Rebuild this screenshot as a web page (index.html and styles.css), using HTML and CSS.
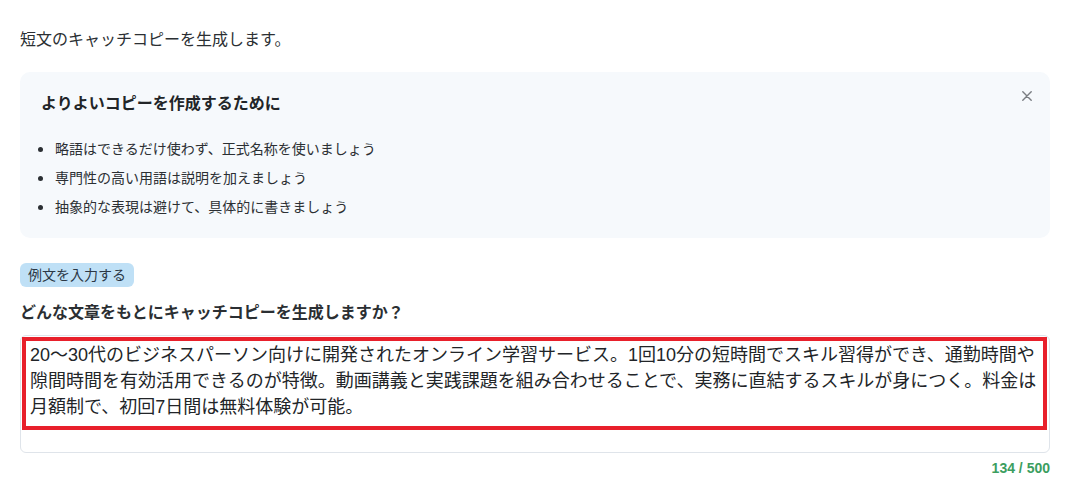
FILE: index.html
```html
<!DOCTYPE html>
<html lang="ja">
<head>
<meta charset="utf-8">
<title>キャッチコピー生成</title>
<link rel="stylesheet" href="styles.css">
</head>
<body>
<main class="page">
  <p class="intro">短文のキャッチコピーを生成します。</p>

  <section class="tips">
    <h2 class="tips-title">よりよいコピーを作成するために</h2>
    <button class="tips-close" type="button" aria-label="閉じる">
      <svg width="10" height="10" viewBox="0 0 10 10"><path d="M0.8 0.8 L9.2 9.2 M9.2 0.8 L0.8 9.2" stroke="#7a7d82" stroke-width="1.4" fill="none" stroke-linecap="round"/></svg>
    </button>
    <ul class="tips-list">
      <li class="tips-item">略語はできるだけ使わず、正式名称を使いましょう</li>
      <li class="tips-item">専門性の高い用語は説明を加えましょう</li>
      <li class="tips-item">抽象的な表現は避けて、具体的に書きましょう</li>
    </ul>
  </section>

  <button class="example-btn" type="button">例文を入力する</button>

  <label class="field-label" for="src">どんな文章をもとにキャッチコピーを生成しますか？</label>
  <div class="input-box">
    <textarea id="src" class="source-input">20〜30代のビジネスパーソン向けに開発されたオンライン学習サービス。1回10分の短時間でスキル習得ができ、通勤時間や隙間時間を有効活用できるのが特徴。動画講義と実践課題を組み合わせることで、実務に直結するスキルが身につく。料金は月額制で、初回7日間は無料体験が可能。</textarea>
  </div>
  <div class="counter">134 / 500</div>
</main>
</body>
</html>
```

FILE: styles.css
```css
html, body {
  margin: 0;
  padding: 0;
  background: #ffffff;
}

body {
  font-family: "Liberation Sans", "Noto Sans CJK JP", sans-serif;
  color: #2b2f33;
}

.page {
  padding: 28px 32px 0 20px;
  display: flex;
  flex-direction: column;
  align-items: flex-start;
}

.intro {
  margin: 0;
  font-size: 16px;
  line-height: 24px;
  color: #2b2f33;
}

.tips {
  position: relative;
  align-self: stretch;
  margin-top: 20px;
  background: #f6f9fc;
  border-radius: 10px;
  padding: 20px 20px 20px 21px;
}

.tips-title {
  margin: 0;
  font-size: 16px;
  line-height: 24px;
  font-weight: bold;
  color: #222528;
}

.tips-close {
  position: absolute;
  top: 18px;
  right: 17px;
  width: 12px;
  height: 12px;
  padding: 1px;
  border: 0;
  background: transparent;
  display: flex;
  align-items: center;
  justify-content: center;
}

.tips-list {
  list-style: none;
  margin: 23px 0 0 0;
  padding: 0;
  display: flex;
  flex-direction: column;
  gap: 8px;
}

.tips-item {
  position: relative;
  padding-left: 14px;
  font-size: 14px;
  line-height: 21px;
  color: #2b2f33;
}

.tips-item::before {
  content: "";
  position: absolute;
  left: -3px;
  top: 8px;
  width: 5px;
  height: 5px;
  border-radius: 50%;
  background: #2b2f33;
}

.example-btn {
  margin-top: 25px;
  height: 24px;
  padding: 0 8px;
  border: 0;
  border-radius: 6px;
  background: #bfe0f6;
  color: #2c3846;
  font-family: inherit;
  font-size: 14px;
  line-height: 24px;
}

.field-label {
  margin-top: 14px;
  font-size: 16px;
  line-height: 24px;
  font-weight: bold;
  color: #2b2f33;
}

.input-box {
  align-self: stretch;
  margin-top: 10px;
  border: 1px solid #dfe4ea;
  border-radius: 6px;
  padding: 1px 2px 22px 1px;
}

.source-input {
  display: block;
  box-sizing: border-box;
  width: 100%;
  height: 93px;
  margin: 0;
  border: 4px solid #e8202b;
  padding: 1px 4px;
  font-family: "Liberation Sans", "Noto Sans CJK JP", sans-serif;
  font-size: 18px;
  line-height: 26px;
  color: #222528;
  background: #ffffff;
  resize: none;
  outline: none;
  overflow: hidden;
}

.counter {
  align-self: flex-end;
  margin-top: 5px;
  font-size: 14px;
  line-height: 20px;
  font-weight: bold;
  color: #3c9e5f;
}
```
